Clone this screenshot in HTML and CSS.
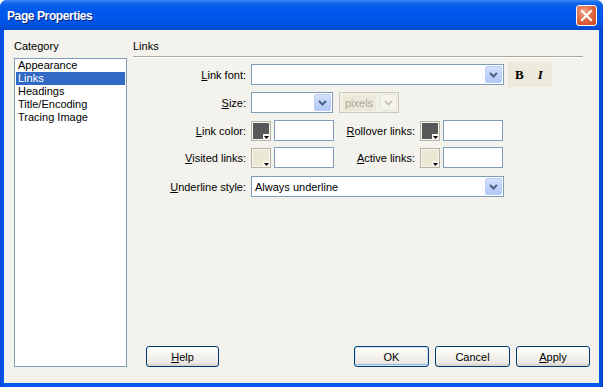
FILE: index.html
```html
<!DOCTYPE html>
<html>
<head>
<meta charset="utf-8">
<link rel="stylesheet" href="styles.css">
</head>
<body>
<div class="window">
  <div class="titlebar">
    <span class="title">Page Properties</span>
    <span class="close"><svg width="21" height="21" viewBox="0 0 21 21"><path d="M6 6L15 15M15 6L6 15" stroke="#fff" stroke-width="2.2" stroke-linecap="square"/></svg></span>
  </div>
  <div class="client">
    <div class="leftcol">
      <div class="caption">Category</div>
      <ul class="listbox">
        <li>Appearance</li>
        <li class="sel">Links</li>
        <li>Headings</li>
        <li>Title/Encoding</li>
        <li>Tracing Image</li>
      </ul>
    </div>
    <div class="rightcol">
      <div class="caption">Links</div>
      <div class="rule"></div>

      <div class="row r1">
        <label class="lbl"><u>L</u>ink font:</label>
        <div class="combo wide"><span class="ctext"></span><span class="arrow"><svg width="15" height="15" viewBox="0 0 15 15"><path d="M4 6l3.5 3.5L11 6" fill="none" stroke="#4d6185" stroke-width="2"/></svg></span></div>
        <div class="styles"><span class="b">B</span><span class="i">I</span></div>
      </div>

      <div class="row r2">
        <label class="lbl"><u>S</u>ize:</label>
        <div class="combo size"><span class="ctext"></span><span class="arrow"><svg width="15" height="15" viewBox="0 0 15 15"><path d="M4 6l3.5 3.5L11 6" fill="none" stroke="#4d6185" stroke-width="2"/></svg></span></div>
        <div class="combo units disabled"><span class="ctext">pixels</span><span class="arrow"><svg width="15" height="15" viewBox="0 0 15 15"><path d="M4 6l3.5 3.5L11 6" fill="none" stroke="#c9c7ba" stroke-width="2"/></svg></span></div>
      </div>

      <div class="row r3">
        <label class="lbl"><u>L</u>ink color:</label>
        <span class="swatch"><svg width="20" height="20" viewBox="0 0 20 20"><rect x="0.5" y="0.5" width="19" height="19" fill="#f7f6f1" stroke="#b5b2a4"/><rect x="2" y="2" width="16" height="16" fill="#58585a"/><rect x="12" y="13" width="7" height="6" fill="#f7f6f1"/><path d="M13 15h5l-2.5 3z" fill="#000"/></svg></span>
        <span class="field"></span>
        <label class="lbl2"><u>R</u>ollover links:</label>
        <span class="swatch"><svg width="20" height="20" viewBox="0 0 20 20"><rect x="0.5" y="0.5" width="19" height="19" fill="#f7f6f1" stroke="#b5b2a4"/><rect x="2" y="2" width="16" height="16" fill="#58585a"/><rect x="12" y="13" width="7" height="6" fill="#f7f6f1"/><path d="M13 15h5l-2.5 3z" fill="#000"/></svg></span>
        <span class="field"></span>
      </div>

      <div class="row r4">
        <label class="lbl"><u>V</u>isited links:</label>
        <span class="swatch"><svg width="20" height="20" viewBox="0 0 20 20"><rect x="0.5" y="0.5" width="19" height="19" fill="#f7f6f1" stroke="#b5b2a4"/><rect x="2" y="2" width="16" height="16" fill="#e9e8d3"/><rect x="12" y="13" width="7" height="6" fill="#f7f6f1"/><path d="M13 15h5l-2.5 3z" fill="#000"/></svg></span>
        <span class="field"></span>
        <label class="lbl2"><u>A</u>ctive links:</label>
        <span class="swatch"><svg width="20" height="20" viewBox="0 0 20 20"><rect x="0.5" y="0.5" width="19" height="19" fill="#f7f6f1" stroke="#b5b2a4"/><rect x="2" y="2" width="16" height="16" fill="#e9e8d3"/><rect x="12" y="13" width="7" height="6" fill="#f7f6f1"/><path d="M13 15h5l-2.5 3z" fill="#000"/></svg></span>
        <span class="field"></span>
      </div>

      <div class="row r5">
        <label class="lbl"><u>U</u>nderline style:</label>
        <div class="combo wide"><span class="ctext">Always underline</span><span class="arrow"><svg width="15" height="15" viewBox="0 0 15 15"><path d="M4 6l3.5 3.5L11 6" fill="none" stroke="#4d6185" stroke-width="2"/></svg></span></div>
      </div>

      <div class="buttons">
        <button class="btn help"><u>H</u>elp</button>
        <div class="btngroup">
          <button class="btn default">OK</button>
          <button class="btn">Cancel</button>
          <button class="btn apply"><u>A</u>pply</button>
        </div>
      </div>
    </div>
  </div>
</div>
</body>
</html>
```

FILE: styles.css
```css
html, body {
  margin: 0;
  padding: 0;
  background: #fff;
}

.window {
  width: 603px;
  height: 387px;
  box-sizing: border-box;
  display: flex;
  flex-direction: column;
  background: linear-gradient(to right, #0a4ad8 0, #0058ee 4px, #0058ee 599px, #0040c0 603px);
  border-radius: 7px 7px 0 0;
  overflow: hidden;
  font-family: "Liberation Sans", Arial, sans-serif;
  font-size: 11px;
  color: #000;
}

.titlebar {
  height: 30px;
  flex: none;
  display: flex;
  align-items: center;
  justify-content: space-between;
  padding: 0 6px 0 7px;
  background: linear-gradient(to bottom, #3f8cf3 0, #1c6ff0 2px, #0a5fe8 5px, #0058ee 10px, #0055e6 22px, #004ed8 27px, #0048cc 30px);
}

.title {
  color: #fff;
  font-weight: bold;
  font-size: 12px;
  letter-spacing: -0.4px;
  text-shadow: 1px 1px 0 #0a1f80;
  margin-top: 1px;
}

.close {
  width: 21px;
  height: 21px;
  box-sizing: border-box;
  border: 1px solid #fff;
  border-radius: 3px;
  background: radial-gradient(circle at 35% 30%, #f3a48a 0, #e36a42 45%, #c9401c 100%);
  display: flex;
  align-items: center;
  justify-content: center;
  margin-top: 1px;
}

.close svg {
  margin: -1px;
}

.client {
  flex: 1;
  margin: 0 4px 4px 4px;
  background: #f3f2ec;
  display: grid;
  grid-template-columns: 113px 457px;
  column-gap: 6px;
  padding: 10px 9px 16px 10px;
}

.caption {
  line-height: 13px;
  height: 13px;
}

.leftcol {
  display: flex;
  flex-direction: column;
}

.listbox {
  flex: 1;
  margin: 5px 0 0 0;
  padding: 0 1px;
  list-style: none;
  background: #fff;
  border: 1px solid #7f9db9;
}

.listbox li {
  line-height: 13px;
  height: 13px;
  padding-left: 2px;
}

.listbox li.sel {
  background: #316ac5;
  color: #fff;
}

.rightcol {
  display: flex;
  flex-direction: column;
}

.rule {
  margin-top: 3px;
  margin-right: 7px;
  border-top: 1px solid #aca899;
  border-bottom: 1px solid #fff;
}

.row {
  display: flex;
  align-items: center;
  height: 21px;
}

.r1 { margin-top: 4px; height: 25px; }
.r2 { margin-top: 5px; }
.r3 { margin-top: 7px; }
.r4 { margin-top: 6px; }
.r5 { margin-top: 8px; }

.lbl {
  width: 113px;
  text-align: right;
  margin-right: 5px;
  flex: none;
  white-space: nowrap;
}

.lbl2 {
  width: 81px;
  text-align: right;
  margin-right: 5px;
  flex: none;
  white-space: nowrap;
}

.combo {
  height: 21px;
  box-sizing: border-box;
  border: 1px solid #7f9db9;
  background: #fff;
  display: flex;
  align-items: center;
  justify-content: space-between;
  padding: 1px;
  flex: none;
}

.combo .ctext {
  padding-left: 2px;
  white-space: nowrap;
}

.combo .arrow {
  width: 17px;
  height: 17px;
  box-sizing: border-box;
  border: 1px solid #b9cdf8;
  border-radius: 2px;
  background: linear-gradient(to bottom, #d5e2fd 0, #c0d3fb 50%, #b2c8f6 100%);
  display: flex;
  align-items: center;
  justify-content: center;
}

.combo.wide { width: 253px; }
.combo.size { width: 82px; }
.combo.units { width: 60px; margin-left: 6px; }

.combo.disabled {
  border-color: #c9c7ba;
  background: #f2f1e6;
  color: #aca899;
}

.combo.disabled .ctext {
  background: #ece9d8;
  padding: 2px 3px;
  margin-left: 1px;
}

.combo.disabled .arrow {
  border-color: #e6e4d8;
  background: #f4f3ee;
}

.styles {
  width: 44px;
  height: 25px;
  margin-left: 4px;
  background: #eeeadb;
  display: flex;
  align-items: center;
  font-family: "Liberation Serif", "Times New Roman", serif;
  font-weight: bold;
  font-size: 13px;
  flex: none;
}

.styles .b { margin-left: 7px; }
.styles .i { margin-left: 14px; font-style: italic; }

.swatch {
  width: 20px;
  height: 20px;
  flex: none;
  display: block;
}

.swatch svg { display: block; }

.field {
  width: 60px;
  height: 21px;
  box-sizing: border-box;
  border: 1px solid #7f9db9;
  background: #fff;
  margin-left: 3px;
  flex: none;
}

.buttons {
  margin-top: auto;
  display: flex;
  align-items: center;
  height: 21px;
}

.btngroup {
  margin-left: auto;
  display: flex;
  gap: 6px;
}

.btn {
  height: 21px;
  width: 75px;
  box-sizing: border-box;
  border: 1px solid #003c74;
  border-radius: 3px;
  background: linear-gradient(to bottom, #ffffff 0, #f4f3ee 40%, #ecebe6 80%, #d6d0c5 100%);
  font-family: "Liberation Sans", Arial, sans-serif;
  font-size: 11px;
  color: #000;
  padding: 0;
  margin: 0;
}

.btn.help {
  margin-left: 13px;
  width: 73px;
}

.btn.apply { width: 74px; }

.btn.default {
  box-shadow: inset 0 0 0 1px #cee7ff, inset 0 -1px 0 1px #98b8ea;
}
```
